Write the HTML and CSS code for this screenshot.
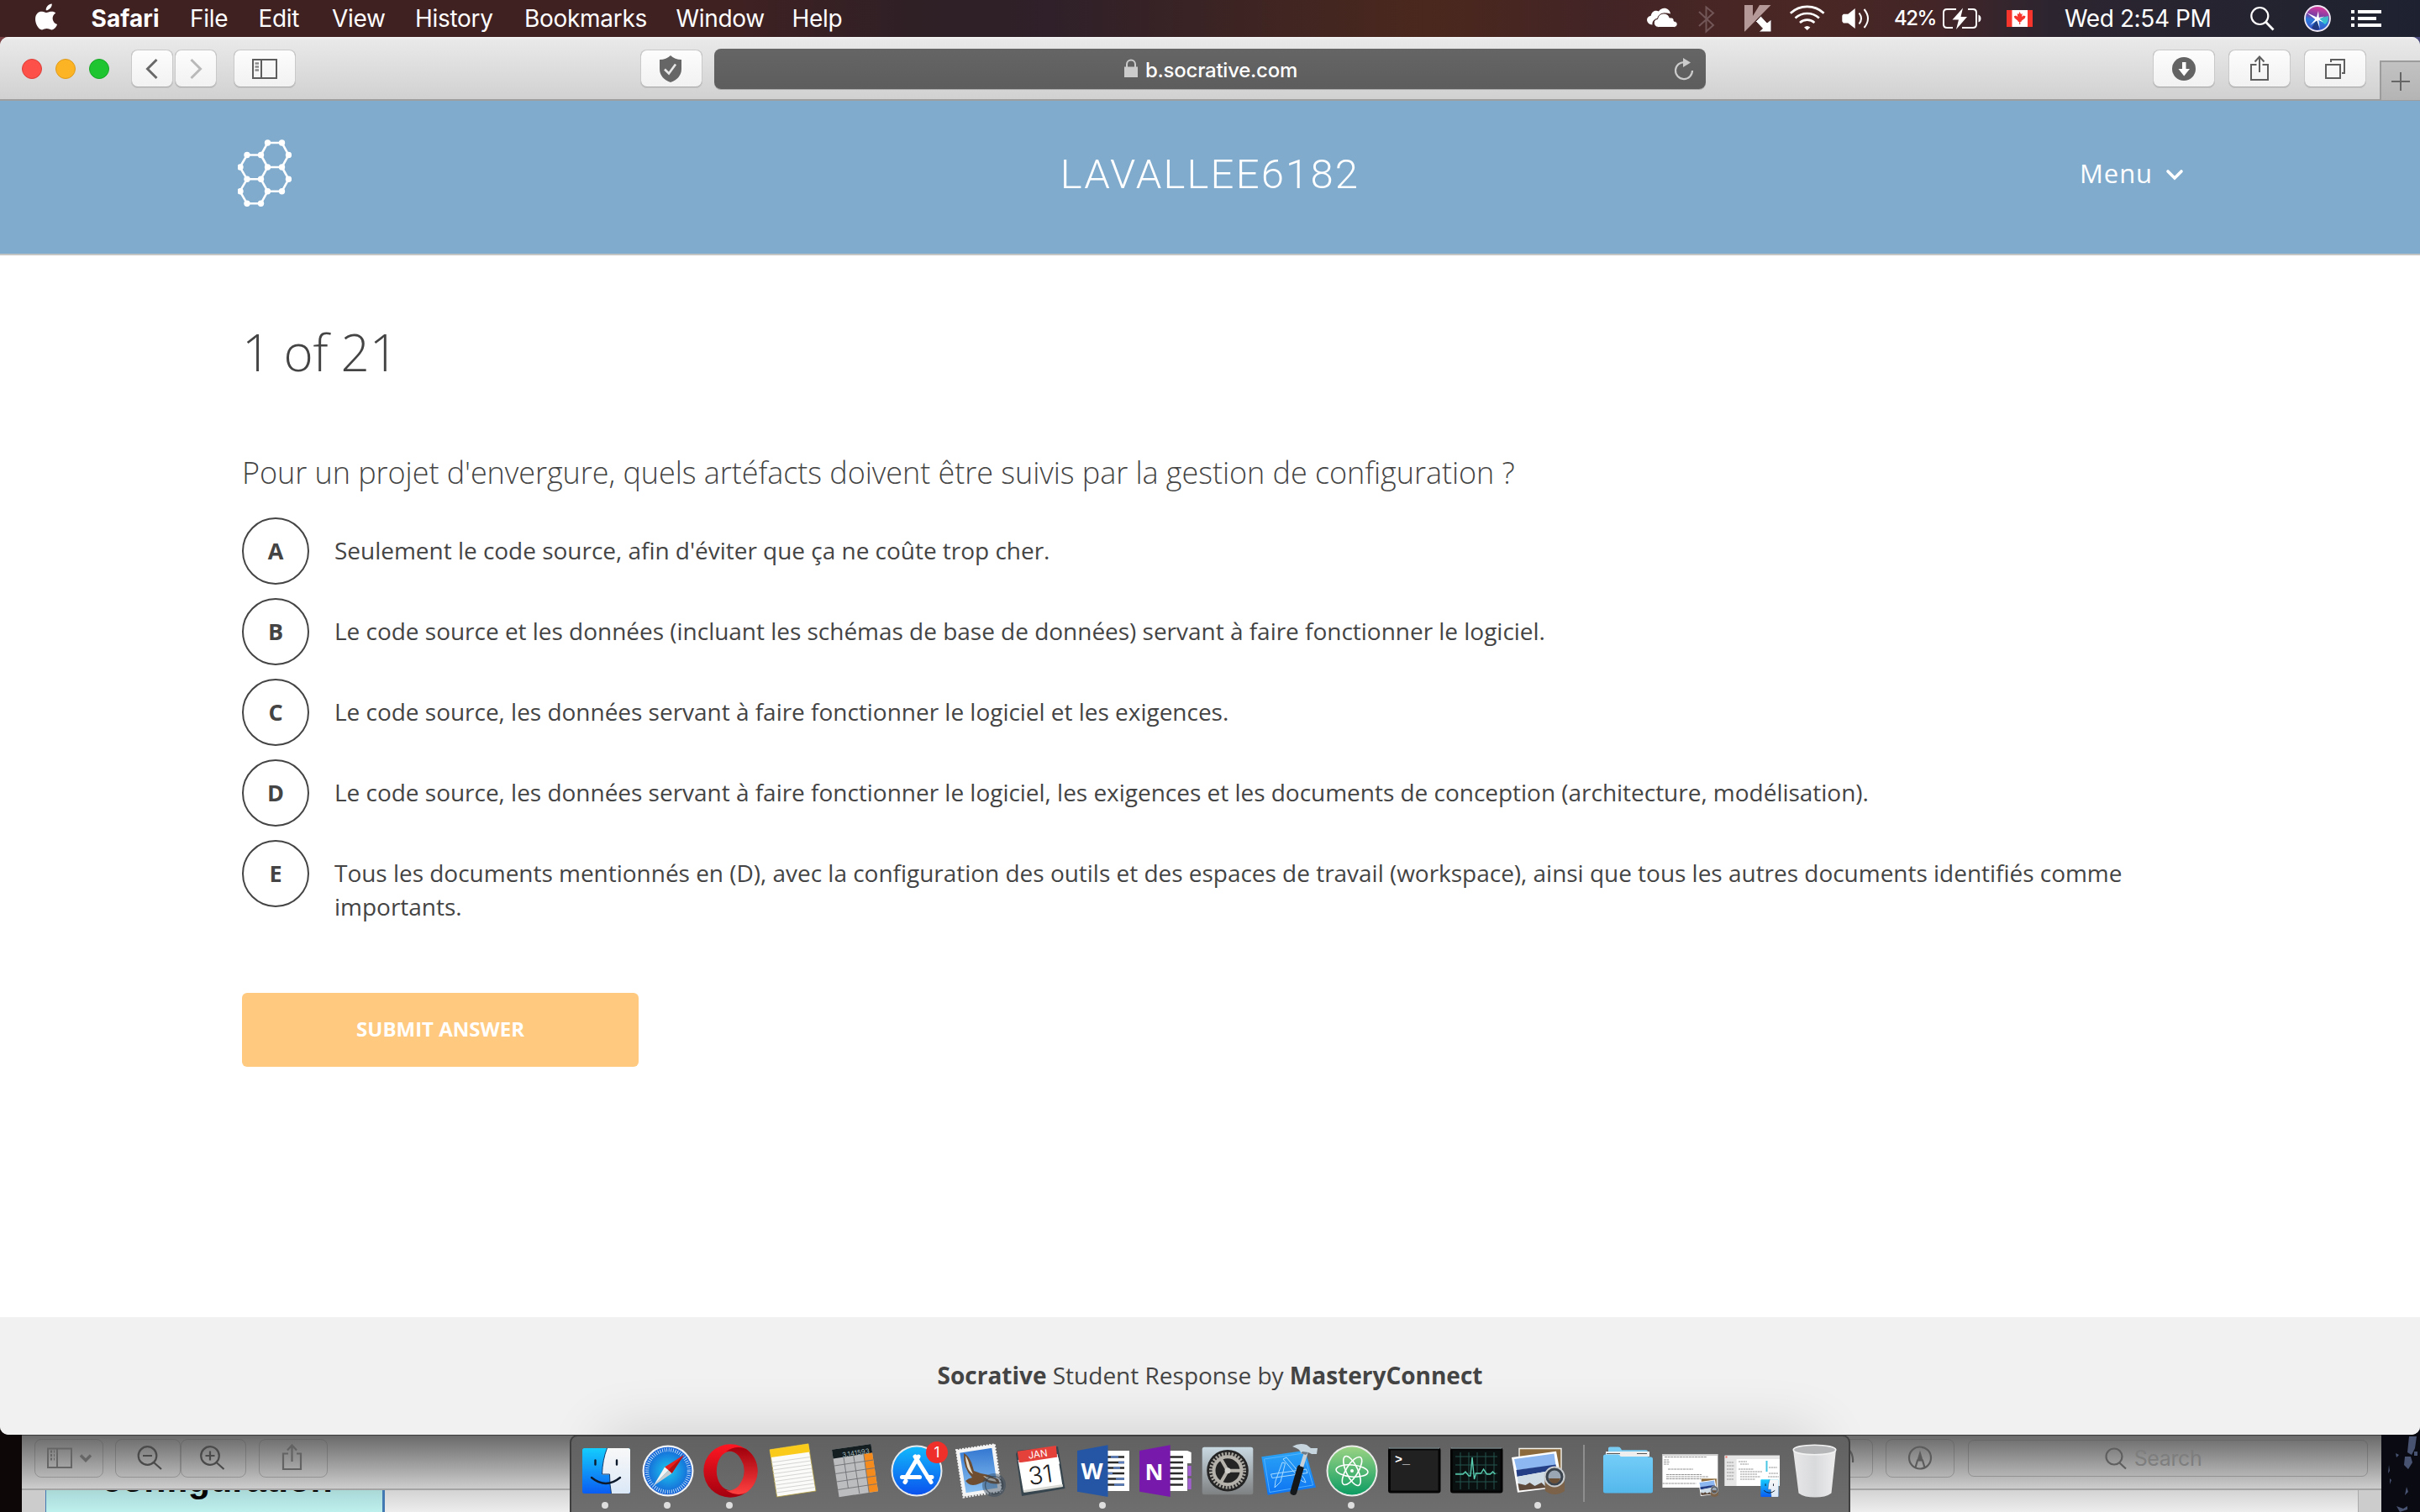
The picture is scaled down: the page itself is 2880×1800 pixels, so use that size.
FILE: index.html
```
<!DOCTYPE html>
<html lang="fr">
<head>
<meta charset="utf-8">
<title>Socrative</title>
<link rel="stylesheet" href="styles.css">
</head>
<body>
<div class="desktop">
  <header class="menubar">
    <svg class="apple" viewBox="0 0 108 44"><path fill="#fff" d="M61.500 4.500c.4 3.900-3.300 8-7 7.800-.5-3.700 3.200-7.500 7-7.800zM66 15.500c-5.500 3.600-4.600 11 1.800 13.600-1.500 4.200-4.600 6.700-6.800 6.300-2-.4-3.500-1.300-5.600-1.300s-3.700 1-5.500 1.300C46 35.900 41.500 28.500 41.800 22c.4-7 5.700-9.300 9.400-8 1.600.5 2.900 1 4.100 1s3-.8 4.700-1.200c2.500-.4 4.700.3 6 1.700z"/></svg>
    <nav class="menus"><span class="app">Safari</span><span>File</span><span>Edit</span><span>View</span><span>History</span><span>Bookmarks</span><span>Window</span><span>Help</span></nav>
    <div class="status">
      <svg viewBox="0 0 60 44"><path fill="#fff" d="M16.500 29.500c-8-.5-8.500-10-1.800-10.700C15.500 13 21 11.500 24 13.500c4-6 13-4.500 14 3-2-1-4-1-5.500-1-5 0-8.500 2.500-10 6.500-4.500.5-6.500 4-6 7.500z"/><path fill="#fff" stroke="#432526" d="M23.500 32.500c-6.500-.5-7-9.500-.8-10 .8-7.500 11.500-9 14.300-1.500 4-.5 5.500 2 5 4 5.500.5 5.500 7 .5 7.500z"/></svg>
      <svg viewBox="0 0 50 44"><path fill="none" stroke="#725657" stroke-width="2" d="M12 14l17 16-8.500 7.500V8.500L29 15.500 12 31"/></svg>
      <svg viewBox="0 0 60 44"><path fill="#b59998" d="M16 6h10v13l8-13h13.500l-31 31.500H16z"/><path fill="#fff" stroke="#432526" d="M35.500 19l7.500 8 5-4v15H33l4.500-4-8-8.500z"/></svg>
      <svg viewBox="0 0 62 44"><g fill="none" stroke="#fff" stroke-width="2.600"><path d="M10.800 15.800a29 29 0 0 1 39.800 0"/><path d="M16.500 21.500a21 21 0 0 1 28.400 0"/><path d="M22 27a13 13 0 0 1 17.400 0"/></g><path fill="#fff" d="M27 32.500q3.700-3 7.400 0l-3.700 3.500z"/></svg>
      <svg viewBox="0 0 72 44"><path fill="#fff" d="M10.300 18.500l1.500-1.800h5.500L25.700 10v24l-8.400-6.500h-5.500l-1.500-2z"/><g fill="none" stroke="#fff" stroke-width="2"><path d="M30.500 15.500q5 6.500 0 13"/><path d="M36.500 11q9 11 0 22"/></g></svg>
      <span class="pct">42%</span>
      <svg viewBox="0 0 60 44"><g fill="none" stroke="#fff" stroke-width="2"><path d="M20 11H9q-4 0-4 4v14q0 4 4 4h7"/><path d="M34 11h6q4 0 4 4v14q0 4-4 4H27"/></g><path fill="#fff" d="M28 9.500L15.500 23.500h7.500L20 35l13-15h-7.500zM46.500 17.500q3 1 3 4.500t-3 4.500z"/></svg>
      <svg viewBox="0 0 88 44"><path fill="#fff" d="M20 12h31v20H20z"/><path fill="#f8352c" d="M20 12h6.500v20H20zM45 12h6v20h-6zM35.500 14l1.600 3 1.600-1-.5 4 2-1.500 2.300.8-.6 2.200-4.300 3.500v1h-1.300v3h-1.200v-3h-1.400v-1L29.500 21.500l-.6-2.200 2.300-.8 2 1.500-.5-4 1.600 1z"/></svg>
      <span class="clock">Wed 2:54 PM</span>
      <svg viewBox="0 0 66 44"><g fill="none" stroke="#fff"><circle cx="31.300" cy="19" r="10" stroke-width="2.200"/><path stroke-width="2.800" d="M38.500 26.200L47.500 35.500"/></g></svg>
      <svg viewBox="0 0 64 44"><defs><linearGradient id="siri" x1="0.600" y1="0" x2="0.400" y2="1"><stop offset="0" stop-color="#e33a9a"/><stop offset=".4" stop-color="#7a3fa5"/><stop offset=".6" stop-color="#2b7bdc"/><stop offset="1" stop-color="#3a4fc6"/></linearGradient></defs><circle cx="34" cy="22" r="15" fill="url(#siri)" stroke="#eee8f4" stroke-width="1.800"/><path fill="#37d6cf" d="M34 22l13-3q1 6-4 10z" opacity=".8"/><path fill="#15224f" d="M34 22l2 13q-5 2-9-2z" opacity=".6"/><path fill="#fff" d="M21 15l12 5.500 2-7.500 .8 8 6.500-1.500-6 3 5 4-6-2.500 1.500 10-3.500-9.500-8 5.500 6-7z"/></svg>
      <svg viewBox="0 0 92 44"><path fill="#fff" d="M10 12h4v4h-4zM18 12h28v4H18zM10 20h4v4h-4zM18 20h22v4H18zM10 28h4v4h-4zM18 28h28v4H18z"/></svg>
    </div>
  </header>

  <section class="preview-window">
    <div class="pv-toolbar">
      <div class="pv-btn w82"><svg width="78" height="44" viewBox="0 0 78 44"><g fill="none" stroke="#666" stroke-width="2"><path d="M14 10.500h28v22.500H14zM25 11v22"/><path stroke-width="3" stroke-dasharray="2 2" d="M17 14h5M17 18.500h5M17 23h5"/><path stroke-width="3.400" d="M53 18.500l6 6 6-6"/></g></svg></div>
      <div class="pv-group"><div class="pv-btn w78"><svg width="74" height="44" viewBox="0 0 74 44"><g fill="none" stroke="#4a4a4a" stroke-width="2.200"><circle cx="36.500" cy="19" r="10.800"/><path d="M31 19h11M44 27l9 8"/></g></svg></div><div class="pv-btn w78"><svg width="74" height="44" viewBox="0 0 74 44"><g fill="none" stroke="#4a4a4a" stroke-width="2.200"><circle cx="33" cy="19" r="10.800"/><path d="M27.500 19h11M33 13.500v11M40.500 27l9 8"/></g></svg></div></div>
      <div class="pv-btn w82"><svg width="78" height="44" viewBox="0 0 78 44"><path fill="none" stroke="#636363" stroke-width="2.200" d="M33 16.500h-6V35h21V16.500H43M37.500 26V7M32 12.500L37.500 6.500l5.500 6"/></svg></div>
      <div class="pv-btn w82 rotate"><svg width="78" height="44" viewBox="0 0 78 44"><path fill="none" stroke="#585858" stroke-width="2.200" d="M33 17h18v18H33zM46 9q11 4 10 18"/></svg></div>
      <div class="pv-btn w82"><svg width="78" height="44" viewBox="0 0 78 44"><g fill="none" stroke="#5c5c5c" stroke-width="2.200"><circle cx="39" cy="21.500" r="13"/><path d="M33.500 33L36 24.500h6l2.500 8.500"/></g><path fill="#5c5c5c" d="M39 12.500l3.500 12h-7z"/></svg></div>
      <div class="pv-search"><svg width="28" height="28" viewBox="0 0 28 28"><g fill="none" stroke="#5f5f5f" stroke-width="2.200"><circle cx="12" cy="12" r="9.500"/><path d="M18.500 19.500l7.500 7"/></g></svg><span>Search</span></div>
    </div>
    <div class="pv-body"><div class="pv-slide"><span>configuration</span></div><div class="pv-doc"></div></div>
  </section>
  <svg class="snow" viewBox="0 0 46 92"><g fill="#59648a"><path d="M33 2h9l-2 14-4 8-5-3zM28 26l7 0 2 7-5 8-5-5zM17 22l4 2-3 3zM39 20h4v5h-4zM18 85l8 3 5-3v4l-9 3zM10 52l2 2-2 5zM30 62l2 6-4 4zM9 36l1 7-2 3z" opacity=".8"/></g></svg>

  <main class="browser">
    <div class="toolbar">
      <div class="lights"><i class="red"></i><i class="yellow"></i><i class="green"></i></div>
      <div class="btn nav back"><svg width="50" height="46" viewBox="0 0 50 46"><path fill="none" stroke="#696969" stroke-width="3" d="M30.500 12L19.500 23l11 11"/></svg></div>
      <div class="btn nav"><svg width="50" height="46" viewBox="0 0 50 46"><path fill="none" stroke="#b9b9b9" stroke-width="3" d="M19.500 12l11 11-11 11"/></svg></div>
      <div class="btn side"><svg width="74" height="46" viewBox="0 0 74 46"><path fill="none" stroke="#5d5d5d" stroke-width="2" d="M23 12h28v22H23zM33 12v22"/><path stroke="#8a8a8a" stroke-width="2.400" d="M25.500 16.500h4.500M25.500 20.500h4.500M25.500 24.500h4.500"/></svg></div>
      <div class="btn shield"><svg width="74" height="46" viewBox="0 0 74 46"><path fill="#666" d="M36 7q5 5 13 5v11q0 11-13 16-13-5-13-16V12q8 0 13-5z"/><path fill="none" stroke="#e8e8e8" stroke-width="2.600" d="M29 23.500l5 5 8-11"/></svg></div>
      <div class="url"><span class="addr"><svg width="18" height="24" viewBox="0 0 18 24"><path fill="#cbcbcb" d="M1 9.500h16V22H1z"/><path fill="none" stroke="#cbcbcb" stroke-width="2" d="M4 10V6.500a5 5 0 0 1 10 0V10"/></svg>b.socrative.com</span><svg class="reload" width="26" height="30" viewBox="0 0 26 30"><path fill="none" stroke="#cbcbcb" stroke-width="2.200" d="M23 16a10 10 0 1 1-9-9.900"/><path fill="#cbcbcb" d="M12 1l9 5.500-9 5.500z"/></svg></div>
      <div class="btn dl"><svg width="74" height="46" viewBox="0 0 74 46"><circle cx="37" cy="23" r="14" fill="#636363"/><path fill="#fff" d="M35 15h4.500v8H44l-6.800 8.500L30.500 23H35z"/></svg></div>
      <div class="btn gap"><svg width="74" height="46" viewBox="0 0 74 46"><path fill="none" stroke="#5f5f5f" stroke-width="2" d="M33.500 18H27v18h20V18h-6.500M37 27V9M31.500 14.500L37 8.500l5.500 6"/></svg></div>
      <div class="btn gap"><svg width="74" height="46" viewBox="0 0 74 46"><path fill="none" stroke="#5f5f5f" stroke-width="2" d="M26 18h17v16H26zM32 15v-3h16v16h-3"/></svg></div>
      <div class="newtab"><svg width="46" height="44" viewBox="0 0 46 44"><path stroke="#666" stroke-width="2" d="M12 23h22M23 12v22"/></svg></div>
    </div>
    <div class="page-header">
      <svg class="logo" width="64" height="84" viewBox="283 164 64 84"><g fill="none" stroke="#fff" stroke-width="2.600"><path d="M318.500 170h17l8 14.500-8 14.500h-17l-8-14.500zM294 184.500h16.500l8 14.500-8 14.300H294L285.500 199zM335.500 199l8 14.300-8 14.400h-17l-8-14.400M310.500 213.300l8 14.400-8 14.600H294l-8.500-14.600 8.500-14.400"/></g><g fill="#fff"><circle cx="318.500" cy="170" r="3.700"/><circle cx="335.500" cy="170" r="3.700"/><circle cx="343.500" cy="184.500" r="3.700"/><circle cx="310.500" cy="184.500" r="3.700"/><circle cx="294" cy="184.500" r="3.700"/><circle cx="286" cy="199" r="3.700"/><circle cx="318.500" cy="199" r="3.700"/><circle cx="335.500" cy="199" r="3.700"/><circle cx="343.500" cy="213.300" r="3.700"/><circle cx="310.500" cy="213.300" r="3.700"/><circle cx="294" cy="213.300" r="3.700"/><circle cx="286" cy="227.700" r="3.700"/><circle cx="318.500" cy="227.700" r="3.700"/><circle cx="335.500" cy="227.700" r="3.700"/><circle cx="310.500" cy="242.300" r="3.700"/><circle cx="294" cy="242.300" r="3.700"/></g></svg>
      <span class="room">LAVALLEE6182</span>
      <span class="menu">Menu<svg width="22" height="16" viewBox="0 0 22 16"><path fill="none" stroke="#fff" stroke-width="3.600" stroke-linecap="round" d="M3 4l8 8 8-8"/></svg></span>
    </div>
    <div class="content">
      <h1>1 of 21</h1>
      <h2>Pour un projet d'envergure, quels artéfacts doivent être suivis par la gestion de configuration ?</h2>
      <div class="options">
        <div class="option"><b>A</b><p>Seulement le code source, afin d'éviter que ça ne coûte trop cher.</p></div>
        <div class="option"><b>B</b><p>Le code source et les données (incluant les schémas de base de données) servant à faire fonctionner le logiciel.</p></div>
        <div class="option"><b>C</b><p>Le code source, les données servant à faire fonctionner le logiciel et les exigences.</p></div>
        <div class="option"><b>D</b><p>Le code source, les données servant à faire fonctionner le logiciel, les exigences et les documents de conception (architecture, modélisation).</p></div>
        <div class="option"><b>E</b><p>Tous les documents mentionnés en (D), avec la configuration des outils et des espaces de travail (workspace), ainsi que tous les autres documents identifiés comme importants.</p></div>
      </div>
      <div class="submit">SUBMIT ANSWER</div>
    </div>
    <footer><strong>Socrative</strong>&nbsp;Student Response by&nbsp;<strong>MasteryConnect</strong></footer>
  </main>

  <div class="dock-shadow"><div></div></div>
  <div class="dock">
    <svg viewBox="0 0 74 92"><defs><linearGradient id="fb" x2="0" y2="1"><stop offset="0" stop-color="#14cdfd"/><stop offset="1" stop-color="#0a5cf2"/></linearGradient><linearGradient id="fw" x2="0" y2="1"><stop offset="0" stop-color="#f8f8f8"/><stop offset="1" stop-color="#dbe8f7"/></linearGradient>
      <g id="finder"><rect x="9" y="16" width="57" height="54" rx="2.500" fill="url(#fb)"/><path fill="url(#fw)" d="M38.500 16H63.500q2.500 0 2.500 2.500v49q0 2.500-2.500 2.500H43.500Q41.500 60 41.600 47.500H32.500Q33 30 38.500 16z"/><path fill="none" stroke="#123c70" stroke-width="1" d="M38.500 16Q33 30 32.500 47h9Q41.500 60 43.500 70"/><path fill="none" stroke="#0d1a2b" stroke-width="2.400" stroke-linecap="round" d="M24.500 30.500v5M50 30.500v5M20 51q17 14 34 0"/></g></defs>
      <use href="#finder"/><circle class="run" cx="36" cy="84" r="4"/></svg>
    <svg viewBox="0 0 74 92"><defs><radialGradient id="sf"><stop offset="0" stop-color="#1cc9ef"/><stop offset="1" stop-color="#1560d6"/></radialGradient></defs><circle cx="37" cy="43" r="30.500" fill="#f1f3f5"/><circle cx="37" cy="43" r="28.300" fill="url(#sf)"/><circle cx="37" cy="43" r="25" fill="none" stroke="#d6ecfb" stroke-width="4.500" stroke-dasharray=".8 1.820"/><path fill="#e6201f" d="M56 24L33 38.500l8.500 7.500z"/><path fill="#b41313" d="M56 24L37.300 42.300l4.200 3.700z"/><path fill="#f4f4f4" d="M33 38.500L19.500 61l18-18.700z"/><path fill="#c9cdd0" d="M41.500 46L19.500 61l18-18.700z"/><circle class="run" cx="36" cy="84" r="4"/></svg>
    <svg viewBox="0 0 74 92"><defs><linearGradient id="op" x2="0" y2="1"><stop offset="0" stop-color="#ff1722"/><stop offset="1" stop-color="#a3000f"/></linearGradient><linearGradient id="op2" x2="0" y2="1"><stop offset="0" stop-color="#a0000c"/><stop offset="1" stop-color="#ff4040"/></linearGradient></defs><path fill="url(#op)" fill-rule="evenodd" d="M37.300 11.300a32 31.700 0 0 1 0 63.400a32 31.700 0 0 1 0-63.400zM37.300 19.700a16.500 23.300 0 0 0 0 46.600a16.500 23.300 0 0 0 0-46.600z"/><path fill="url(#op2)" d="M32 20q12-8 24-3a32 31.700 0 0 1 0 52q-12 5-24-3 8 2 15-5 7-10 7-18t-7-18q-7-7-15-5z"/><circle class="run" cx="36" cy="84" r="4"/></svg>
    <svg viewBox="0 0 74 92"><path fill="#fbfbf9" stroke="#b09c3c" stroke-width=".8" d="M10 17.700l46-7L65 67l-46.400 7z"/><path fill="#fbcb1b" d="M10 17.700l46-7 1.700 9.800-46.200 6.500z"/><path stroke="#d5d5d3" stroke-width="1" d="M12.200 33l46-6.500M12.900 37.500l46-6.500M13.600 42l46-6.500M14.300 46.500l46-6.500M15 51l46-6.500M15.700 55.500l46-6.500M16.400 60l46-6.500M17.100 64.500l46-6.500M17.800 69l46-6.500"/></svg>
    <svg viewBox="0 0 74 92"><path fill="#bcbdbf" d="M10 17.700l46.400-6.700L65 67.300l-46.400 7z"/><path fill="#141d20" d="M10 17.700l46.400-6.700 1.700 10.500-46.500 7z"/><path fill="#f58a1d" d="M47.800 23l10.300-1.500L65 67.300l-10.800 1.500z"/><path fill="none" stroke="#6f7174" stroke-width=".9" d="M12.800 37l46.500-7M14.300 46.500l46.500-7M15.800 56l46.500-7M17.200 65.500l46.500-7M24 27l5.500 37M35.800 25l7 45M47.800 23l6.400 46"/><text class="calc" transform="rotate(-8.500 39 23)" x="55" y="24.500">3.141593</text></svg>
    <svg viewBox="0 0 74 92"><defs><linearGradient id="as" x2="0" y2="1"><stop offset="0" stop-color="#12b8fb"/><stop offset="1" stop-color="#0b52ee"/></linearGradient></defs><circle cx="37" cy="43" r="30.500" fill="#e8eaec"/><circle cx="37" cy="43" r="28.500" fill="url(#as)"/><path fill="none" stroke="#fff" stroke-width="5" stroke-linecap="round" d="M39 26L25.500 49M35 26l19 30.500M19.500 50.500h21M50 50.500h5M24 55l-1 1.500"/><circle cx="61" cy="21" r="13" fill="#ee2f2a"/><text x="61" y="27" class="badge">1</text></svg>
    <svg viewBox="0 0 74 92"><defs><linearGradient id="ma" x2="0" y2="1"><stop offset="0" stop-color="#2f74cf"/><stop offset="1" stop-color="#8fc4f3"/></linearGradient></defs><path fill="url(#ma)" stroke="#f5f5f5" stroke-width="4" d="M12 20l42-6.500L61.500 65l-41.500 6.500z"/><path fill="none" stroke="#f5f5f5" stroke-width="2" stroke-dasharray="2 1.600" d="M10 18.200l45.800-7L64 67.500l-45.500 7z"/><path fill="#6e4d30" d="M19 22q5 2 9 11 2 6 3 10l8 3 10 2 11 5 2 5q-9 2-17-3l-7 3q-9 4-14 0l-3-3q3-3 8-4Q18 40 19 22z"/><path fill="#e6dccb" d="M21 25q3 4 5 12 2 6 4 10-5-3-7-9-2-7-2-13zM42 49l14 4 2 3-10-2z"/><circle cx="55" cy="60" r="14" fill="#34485c" opacity=".45"/><circle cx="55" cy="60" r="10.500" fill="none" stroke="#2b3743" stroke-width="1.200" opacity=".6"/></svg>
    <svg viewBox="0 0 74 92"><path fill="#36454e" d="M7 23l2-4 48-5 8.500 50-51.500 9z"/><path fill="#fff" d="M9.500 30l47-7L62.500 61 16 68z"/><path fill="#d9d9d5" d="M16 66l46.500-7 .5 3-46.500 7z"/><path fill="#e5413b" d="M8.700 19.700l46-6.700 2 19-46 1z"/><path fill="#fff" d="M10.700 33.500l46.500-7 2 8-47 5z"/><text class="jan" transform="rotate(-8 34 26)" x="33.500" y="27">JAN</text><text class="day" transform="rotate(-8 37 58)" x="37.500" y="58">31</text></svg>
    <svg viewBox="0 0 74 92"><path fill="#fff" d="M38 19h30v48H38z"/><path stroke="#2a2a2a" stroke-width="2.400" d="M42 26.500h20M42 33h20M42 39.500h20M42 46h20M42 52.500h20M42 59.500h20"/><path stroke="#5b7dbb" stroke-width="2.400" d="M46 26.500h9M55 33h7M49 39.500h8M42 46h6M52 52.500h10M50 59.500h12"/><path fill="#2456a5" d="M6 19l36.500-6.700v61.700L6 67.700z"/><text class="ms" x="23.500" y="53">W</text><circle class="run" cx="36" cy="84" r="4"/></svg>
    <svg viewBox="0 0 74 92"><path fill="#fff" d="M38 19h25l4.700 2v13H63v33H38z"/><path fill="#a25fd0" d="M63.500 37h4.200v12h-4.200zM63.500 52h4.200v13h-4.200z"/><path stroke="#2a2a2a" stroke-width="2.400" d="M42 26.500h16M42 33h16M42 39.500h16M42 46h16M42 52.500h16M42 59.500h16"/><path fill="#7719aa" d="M6 19l36.700-6.700v61.700L6 67.700z"/><text class="ms" x="23.500" y="54">N</text></svg>
    <svg viewBox="0 0 74 92"><defs><linearGradient id="sp" x2="0" y2="1"><stop offset="0" stop-color="#c9d9e2"/><stop offset="1" stop-color="#7f8182"/></linearGradient></defs><rect x="6.700" y="14.700" width="60.600" height="56.600" rx="2.500" fill="url(#sp)"/><circle cx="37" cy="42.700" r="24.800" fill="#242424"/><circle cx="37" cy="42.700" r="20" fill="none" stroke="#a8a59f" stroke-width="4" stroke-dasharray="2.200 1.730"/><circle cx="37" cy="42.700" r="16.500" fill="none" stroke="#b5b2ab" stroke-width="4"/><path stroke="#b5b2ab" stroke-width="4" d="M37 42.700h16M37 42.700l-8-14M37 42.700l-8 14"/><circle cx="37" cy="42.700" r="3.500" fill="#d0cfca"/></svg>
    <svg viewBox="0 0 74 92"><defs><linearGradient id="xc" x2="0" y2="1"><stop offset="0" stop-color="#2aa4f6"/><stop offset="1" stop-color="#0e74f3"/></linearGradient></defs><path fill="url(#xc)" d="M3.300 26.300l52-7.600L68 62.700 10.700 71.700z"/><path fill="none" stroke="#63bbff" stroke-width=".8" d="M6.500 29l47-7L64.500 60 13 68.500z"/><path fill="none" stroke="#a9dcff" stroke-width="1" d="M14.500 47l42-6 1.500 4.500-42 6zM28 33l3.500 1L26 56l-7 7 1-8zM29 29l4-2L54 52l2 5-5-2z"/><path stroke="#15181b" stroke-width="8" stroke-linecap="round" d="M49.500 40L41.500 68"/><path stroke="#c9d0d5" stroke-width="4.500" d="M57 19l-6 19"/><path fill="#c7d5df" d="M40 14q8-5 17-2l5 4h8l-1 7h-6l-4-2-3 3-6-2q0-5-10-8z"/><path fill="#6e7c88" d="M52 20l7 1-3 3-6-2z"/></svg>
    <svg viewBox="0 0 74 92"><defs><linearGradient id="at" x2="0" y2="1"><stop offset="0" stop-color="#9ad383"/><stop offset="1" stop-color="#0d9c63"/></linearGradient></defs><circle cx="37" cy="43" r="30.500" fill="#ebecea"/><circle cx="37" cy="43" r="28.500" fill="url(#at)"/><g fill="none" stroke="#fff" stroke-width="1.600"><ellipse cx="37" cy="43" rx="19" ry="7" transform="rotate(5 37 43)"/><ellipse cx="37" cy="43" rx="19" ry="7" transform="rotate(65 37 43)"/><ellipse cx="37" cy="43" rx="19" ry="7" transform="rotate(122 37 43)"/></g><circle cx="37" cy="43" r="2" fill="#fff"/><circle class="run" cx="36" cy="84" r="4"/></svg>
    <svg viewBox="0 0 74 92"><rect x="7.500" y="17" width="59.500" height="51" rx="1.500" fill="#212121" stroke="#050505" stroke-width="3"/><path stroke="#a4b5bb" stroke-width="1.200" d="M7 16h60"/><text class="term" x="14" y="34">&gt;_</text></svg>
    <svg viewBox="0 0 74 92"><rect x="7.500" y="17" width="59.500" height="51" rx="1.500" fill="#0a0f10" stroke="#050505" stroke-width="3"/><path stroke="#a4b5bb" stroke-width="1.200" d="M7 16h60"/><path stroke="#23554c" stroke-width="1" d="M12 26h50M12 36h50M12 46h50M12 56h50M18 21v44M28 21v44M38 21v44M48 21v44M58 21v44"/><path fill="none" stroke="#59cdb0" stroke-width="1.400" d="M12 47h9l3-3 4 5h2l2-22 2.500 26 2-7h6l3-5 4 6h4l3-3 3 3"/></svg>
    <svg viewBox="0 0 74 92"><defs><g id="prev"><path fill="#8c6a3b" stroke="#f3f1ec" stroke-width="1.400" d="M14 16.500h50v44H14z"/><path fill="#fff" d="M5 27l53-7.300L66 62 12 68.700z"/><path fill="#8cb7f0" d="M8 29l47.500-6.500 2 14L11 42z"/><path fill="#243f86" d="M10.500 42l47-6.500 1 6L11.500 50z"/><path fill="#cfdce6" d="M11.500 50l47-8.500L62 60l-48 5.500z"/><path fill="#5d4a3c" d="M12.500 58l9 2 5-3 6 4 8-4 6 6-32.500 3.500z"/><path fill="#7b6248" d="M44 50h24v17q-12 8-23 0z"/><circle cx="56" cy="50" r="11.500" fill="#3b434c" stroke="#c9ccce" stroke-width="2"/><circle cx="56" cy="50" r="7.500" fill="#9ba6b4"/><path fill="#6b5038" d="M49 52h14q-2 6-7 6t-7-6z"/></g></defs><use href="#prev"/><circle class="run" cx="36" cy="84" r="4"/></svg>
    <i class="sep"></i>
    <svg viewBox="0 0 74 92"><defs><linearGradient id="fo" x2="0" y2="1"><stop offset="0" stop-color="#74cdf8"/><stop offset="1" stop-color="#54b8ec"/></linearGradient></defs><path fill="#7accf3" d="M13 16q0-1.500 2-1.500h10q2 0 3 2l1 1.800h29q2 0 2 2v10H13z"/><path fill="#eee" d="M10 20h52v6H10z"/><path stroke="#555" stroke-width="1.200" d="M11 22.500h16M47 22.500h12"/><path fill="url(#fo)" d="M7 26q0-2.500 2.500-2.500h15q2 0 3.500 3h35.500q2.500 0 2.500 2.500v38q0 2.500-2.500 2.500h-54Q7 69.500 7 67z"/></svg>
    <svg viewBox="0 0 74 92"><path fill="#fff" d="M3.400 23h66v40h-66z"/><path stroke="#bbb" stroke-width="1.500" d="M3.400 24h66"/><path stroke="#888" stroke-width=".9" stroke-dasharray="3 .6" d="M6 26.500h50M5 30h6M5 32.500h7M5 35h6M10 41h30M8 47.500h42M8 50h50M8 52.500h44M3.400 58h40"/><use href="#prev" transform="translate(44.500 45.500) scale(.37 .4)"/></svg>
    <svg viewBox="0 0 74 92"><path fill="#fff" d="M3.600 24.700H69V61H3.600z"/><path fill="#e6e6e6" d="M3.600 24.700H69V29H3.600zM3.600 29h14v32h-14z"/><path fill="#f0685e" d="M4.500 25.500h2v2h-2z"/><path stroke="#999" stroke-width="1.100" stroke-dasharray="2.500 .5" d="M6 33h8M6 37h9M6 41h8M6 45h9M6 49h8M6 53h8M20 32h10M22 35h10M20 41h18M22 44h26M22 47h20M22 50h24M22 53h18M56 39h10M56 46h11M55 50h13"/><path stroke="#49c7e2" stroke-width="2" d="M53.500 31v13"/><use href="#finder" transform="translate(43 47) scale(.37 .385)"/></svg>
    <svg viewBox="0 0 74 92"><defs><linearGradient id="tr"><stop offset="0" stop-color="#e7e7e8"/><stop offset=".5" stop-color="#d9dadc"/><stop offset="1" stop-color="#ededee"/></linearGradient></defs><path fill="url(#tr)" d="M11 18h51l-5.500 51.500q-6 5-19.500 5t-19.500-5z"/><ellipse cx="36.500" cy="18" rx="25.300" ry="5.800" fill="#b4b6b8" stroke="#f2f2f2" stroke-width="1.600"/></svg>
  </div>
</div>
</body>
</html>
```
FILE: styles.css
```
* { box-sizing: border-box; }
html, body { margin: 0; }
body { width: 2880px; height: 1800px; overflow: hidden; font-family: "Open Sans", sans-serif; color: #444; }
h1, h2, p { margin: 0; }
svg { display: block; flex: none; }

.desktop { position: relative; width: 2880px; height: 1800px; overflow: hidden; background: linear-gradient(90deg, #7a4144, #4a4b7c) 0 0 / 100% 100px no-repeat, linear-gradient(90deg, #0d0807 50%, #090a12 50%); }

/* macOS menu bar */
.menubar { display: flex; align-items: center; justify-content: space-between; height: 44px; color: #fff; font: 400 28px/44px Inter, sans-serif; letter-spacing: -.3px;
  background: linear-gradient(90deg, #3f2122 0, #3f2122 880px, #2f2026 1080px, #2f2029 1250px, #4b281d 1700px, #432426 1900px, #4a2724 2140px, #432527 2300px, #2c2530 2440px, #1e2230 2880px); }
.apple { width: 108.500px; height: 44px; }
.menus { display: grid; grid-template-columns: 117.500px 81.500px 87.500px 99px 130px 180.500px 138px 80px; height: 44px; }
.menus .app { font-weight: 700; letter-spacing: .1px; }
.status { display: grid; grid-template-columns: 60px 50px 60px 62px 72px 54px 60px 88px 202px 66px 64px 92px; height: 44px; margin-left: auto; }
.status svg { width: 100%; height: 44px; }
.pct { font-size: 24px; font-weight: 500; letter-spacing: -1.500px; line-height: 43px; }
.clock { padding-left: 1px; letter-spacing: -.4px; }

/* Safari window */
.browser { position: absolute; left: 0; top: 44px; width: 2880px; height: 1664px; display: flex; flex-direction: column; background: #fff; border-radius: 10px; overflow: hidden; }
.toolbar { display: flex; align-items: flex-start; height: 76px; padding: 15px 0 0 26px; background: linear-gradient(#f6f6f6 0, #e9e9e9 3px, #d1d1d1 100%); border-bottom: 2px solid #9e9e9e; }
.lights { display: flex; gap: 16px; margin: 11px 26px 0 0; }
.lights i { width: 24px; height: 24px; border-radius: 50%; }
.red { background: #fc5049; border: 1px solid #dc3e38; }
.yellow { background: #fdb424; border: 1px solid #dc9a1c; }
.green { background: #1fc431; border: 1px solid #16a625; }
.btn { width: 74px; height: 46px; border-radius: 8px; background: linear-gradient(#fdfdfd, #f1f1f1); box-shadow: inset 0 0 0 1px #c9c9c9, inset 0 -1px 0 1px #acacac; }
.nav { width: 50px; margin-right: 20px; }
.back { margin-right: 2px; }
.side { margin-right: 410px; }
.shield { margin-right: 14px; }
.url { display: grid; grid-template-columns: 1fr auto; align-items: center; width: 1180px; height: 48px; margin-top: -1px; padding-right: 13px; border-radius: 8px; background: linear-gradient(#656565, #5d5d5d); box-shadow: 0 1px 0 #aaa; color: #fff; font: 500 24px/46px Inter, sans-serif; letter-spacing: -.25px; }
.addr { display: flex; align-items: center; gap: 8px; padding: 3px 0 0 487px; }
.addr svg { margin-top: -5px; }
.dl { margin-left: 532px; }
.gap { margin-left: 16px; }
.newtab { width: 48px; height: 47px; margin: 13px 0 0 16px; background: linear-gradient(#c2c2c2, #b4b4b4); border: 2px solid #9c9c9c; border-right: 0; border-bottom: 0; }

.page-header { display: grid; grid-template-columns: 1fr auto 1fr; align-items: center; height: 184px; padding: 0 281px 10px 283px; background: #80abcd; border-bottom: 2px solid #c2c5c4; color: #fff; }
.room { font: 300 49px/60px Roboto, sans-serif; letter-spacing: 2.200px; padding: 3px 2px 0 0; }
.menu { display: flex; align-items: center; justify-content: flex-end; gap: 15px; font-size: 31px; letter-spacing: .900px; }
.menu svg { margin-top: 4px; }

.content { flex: 1; padding: 85px 288px 0; }
h1 { font-size: 60px; line-height: 60px; font-weight: 300; letter-spacing: -.2px; }
h2 { margin-top: 90px; font-size: 36px; line-height: 48px; font-weight: 300; letter-spacing: -.055px; }
.options { display: flex; flex-direction: column; gap: 16px; margin-top: 29px; }
.option { display: flex; gap: 30px; width: 2300px; min-height: 80px; }
.option b { flex: none; width: 80px; height: 80px; border: 2px solid #444; border-radius: 50%; font-size: 27px; font-weight: 700; line-height: 76px; text-align: center; }
.option p { max-width: 2180px; padding-top: 19px; font-size: 28px; line-height: 40px; letter-spacing: -.022px; }
.submit { width: 472px; height: 88px; margin-top: 83px; border-radius: 6px; background: #ffca80; color: #fff; font-size: 24px; font-weight: 700; line-height: 86px; text-align: center; }
footer { display: flex; align-items: center; justify-content: center; height: 140px; padding-bottom: 2px; background: #f1f1f1; font-size: 28px; }

/* Preview window behind Safari */
.preview-window { position: absolute; left: 26px; top: 1708px; width: 2808px; height: 92px; display: flex; flex-direction: column; }
.pv-toolbar { display: flex; align-items: flex-start; height: 66px; padding: 4px 16px 0 15px; background: linear-gradient(#6a6a6a, #9a9a9a 50%, #cdcdcd); border-bottom: 2px solid #a4a4a4; border-top: 1px solid #3c3c3c; }
.pv-btn { display: flex; justify-content: center; height: 46px; border: 1px solid rgba(80,80,80,.35); border-radius: 8px; }
.w82 { width: 82px; }
.w78 { width: 78px; }
.pv-group { display: flex; margin: 0 15px 0 14px; }
.rotate { margin: 0 15px 0 auto; }
.pv-search { display: flex; align-items: center; justify-content: center; gap: 8px; width: 476px; height: 44px; margin: 1px 0 0 16px; padding-right: 36px; border: 1px solid rgba(80,80,80,.35); border-radius: 7px; color: #7e7e7e; font: 400 25px/44px Inter, sans-serif; letter-spacing: -.4px; }
.pv-body { flex: 1; display: flex; padding: 0 27px 0 28px; background: #cccccc; }
.pv-slide { width: 404px; overflow: hidden; padding-left: 66px; border: solid #4379b3; border-width: 0 3px 0 1px; background: linear-gradient(#a9d8d7, #bef0ee); color: #050505; font: 700 43px/54px "Liberation Sans", sans-serif; }
.pv-slide span { display: block; margin-top: -40px; height: 66px; }
.pv-doc { flex: 1; background: linear-gradient(#d3d3d3, #ededed); border-right: 1px solid #aaa; }
.snow { position: absolute; left: 2834px; top: 1708px; width: 46px; height: 92px; }

/* Dock */
.dock-shadow { position: absolute; left: 500px; top: 1568px; width: 1880px; height: 140px; overflow: hidden; }
.dock-shadow div { margin: 140px 220px 0; height: 60px; box-shadow: 0 0 70px rgba(0,0,0,.16); }
.dock { position: absolute; left: 678px; top: 1708px; width: 1524px; height: 94px; display: flex; padding-left: 4px; background: linear-gradient(#616161, #6e6e6e); border: 2px solid #3f3f3f; border-radius: 9px 9px 0 0; }
.dock svg { width: 74px; height: 92px; margin-top: -2px; }
.sep { flex: none; width: 2px; height: 68px; margin: 10px 14.500px 0 16px; background: #8e8e8e; }
.run { fill: #dedede; }
.badge { fill: #fff; font: 400 17px Inter, sans-serif; text-anchor: middle; }
.calc { fill: #9db0b4; font: 400 8px Inter, sans-serif; text-anchor: end; }
.jan { fill: #fff; font: 400 11.500px Inter, sans-serif; text-anchor: middle; }
.day { fill: #1d1d1d; font: 300 29px Inter, sans-serif; text-anchor: middle; }
.ms { fill: #fff; font: 700 27px "Open Sans", sans-serif; text-anchor: middle; }
.term { fill: #fff; font: 700 15px "Liberation Mono", monospace; }
```
